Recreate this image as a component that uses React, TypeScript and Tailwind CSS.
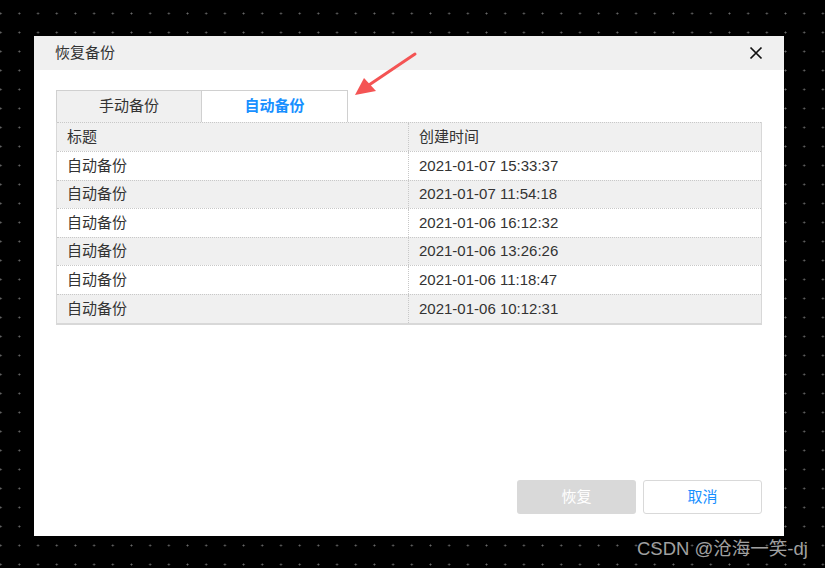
import React from 'react';

const rows = [
  { title: '自动备份', time: '2021-01-07 15:33:37' },
  { title: '自动备份', time: '2021-01-07 11:54:18' },
  { title: '自动备份', time: '2021-01-06 16:12:32' },
  { title: '自动备份', time: '2021-01-06 13:26:26' },
  { title: '自动备份', time: '2021-01-06 11:18:47' },
  { title: '自动备份', time: '2021-01-06 10:12:31' },
];

const font = "font-['Liberation_Sans','Noto_Sans_CJK_SC',sans-serif]";

export default function App() {
  return (
    <div
      className={`relative w-[825px] h-[568px] overflow-hidden bg-black bg-[radial-gradient(circle,#6a6a6a_0.8px,transparent_1.2px)] bg-[size:18.7px_19px] bg-[position:10px_4px] pt-[36px] pl-[34px] ${font}`}
    >
      <div className="w-[750px] h-[500px] bg-white flex flex-col">
        {/* header */}
        <div className="h-[34px] bg-[#f0f0f0] flex items-center justify-between pl-[21px] pr-[20px]">
          <span className="text-[15px] text-[#333]">恢复备份</span>
          <svg width="14" height="14" viewBox="0 0 14 14" className="mr-[1px]">
            <path d="M1.5 1.5 L12.5 12.5 M12.5 1.5 L1.5 12.5" stroke="#111" strokeWidth="1.7" />
          </svg>
        </div>

        <div className="flex-1 flex flex-col px-[22px] pt-[20px] pb-[22px]">
          {/* tabs */}
          <div className="flex h-[32px]">
            <div className="w-[146px] border border-b-0 border-[#d0d0d0] bg-[#f0f0f0] flex items-center justify-center text-[15px] text-[#333]">
              手动备份
            </div>
            <div className="w-[146px] border border-l-0 border-b-0 border-[#d0d0d0] bg-white flex items-center justify-center text-[15px] font-bold text-[#1890ff]">
              自动备份
            </div>
          </div>

          {/* table */}
          <div className="border-l border-r border-b-2 border-[#d8d8d8] text-[15px] text-[#333]">
            <div className="grid grid-cols-[352px_1fr] h-[29px] bg-[#f0f0f0] border-t border-dotted border-[#c8c8c8]">
              <div className="flex items-center pl-[10px] border-r border-dotted border-[#c8c8c8]">标题</div>
              <div className="flex items-center pl-[10px]">创建时间</div>
            </div>
            {rows.map((r, i) => (
              <div
                key={i}
                className={`grid grid-cols-[352px_1fr] h-[28.6px] border-t border-dotted border-[#c8c8c8] ${i % 2 === 1 ? 'bg-[#f0f0f0]' : 'bg-white'}`}
              >
                <div className="flex items-center pl-[10px] border-r border-dotted border-[#c8c8c8]">{r.title}</div>
                <div className="flex items-center pl-[10px]">{r.time}</div>
              </div>
            ))}
          </div>

          <div className="flex-1" />

          {/* footer buttons */}
          <div className="flex justify-end gap-[7px]">
            <button className="w-[119px] h-[34px] rounded-[3px] bg-[#d9d9d9] text-white text-[15px]">恢复</button>
            <button className="w-[119px] h-[34px] rounded-[3px] bg-white border border-[#d9d9d9] text-[#1890ff] text-[15px]">取消</button>
          </div>
        </div>
      </div>

      {/* annotation arrow */}
      <svg className="absolute left-[350px] top-[50px]" width="72" height="52" viewBox="0 0 72 52">
        <line x1="65" y1="4" x2="16" y2="37" stroke="#f45454" strokeWidth="3" strokeLinecap="round" />
        <polygon points="5,45 14,28 26,41" fill="#f45454" />
      </svg>

      {/* watermark */}
      <div className="absolute left-[637px] top-[535px] text-[18.5px] text-[#a0a0a0]">
        CSDN @沧海一笑-dj
      </div>
    </div>
  );
}
